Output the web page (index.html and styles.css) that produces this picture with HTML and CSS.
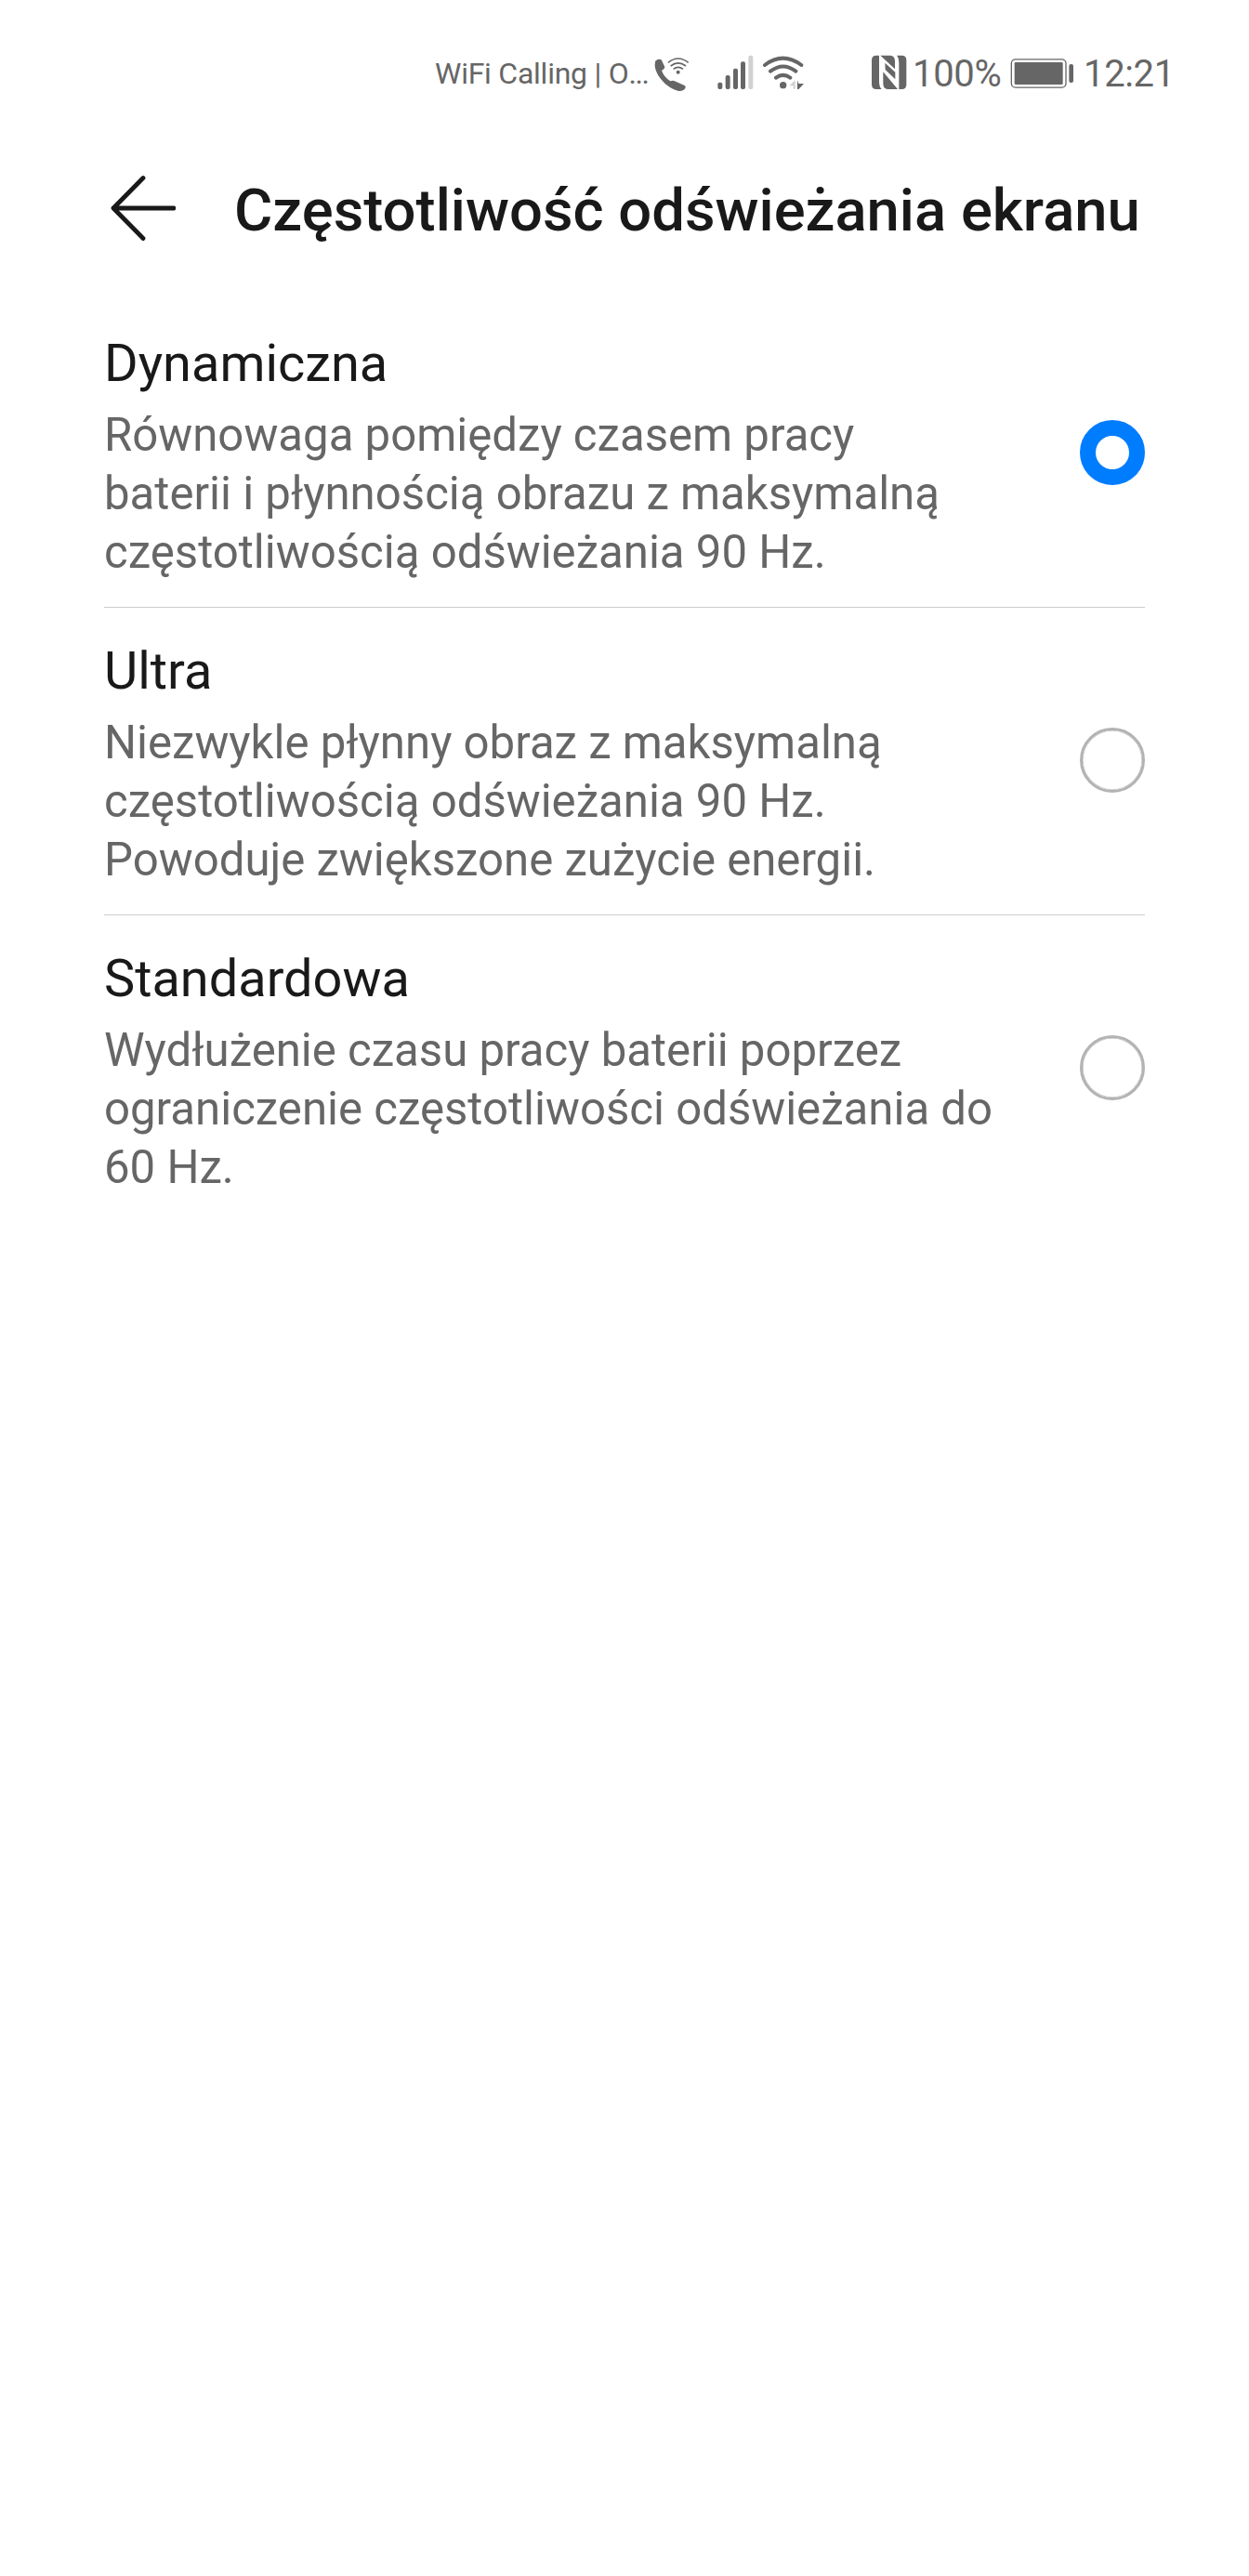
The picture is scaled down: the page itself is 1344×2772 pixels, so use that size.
FILE: index.html
```html
<!DOCTYPE html>
<html lang="pl">
<head>
<meta charset="utf-8">
<title>Częstotliwość odświeżania ekranu</title>
<link rel="stylesheet" href="styles.css">
</head>
<body>
<header class="status">
<span class="carrier">WiFi Calling | O<span class="dots">...</span></span>
<svg class="icon call" width="42" height="44" viewBox="786 48 126 132"><path d="M797 76q10-7 18-3l11 23q0 7-10 11q6 20 28 35q9-4 14 0l32 14q6 5 0 12q-7 7-18 6c-42-8-85-60-77-93q0-3 2-5z" fill="#666"/><circle cx="869" cy="113" r="6" fill="#666"/><path d="M837 82q32-26 65 0M845 93q24-19 49 0M854 103q15-12 31 0" fill="none" stroke="#666" stroke-width="5"/></svg>
<svg class="icon signal" width="42" height="44" viewBox="990 48 126 132"><g fill="#666"><rect x="997" y="146" width="15" height="22" rx="6"/><rect x="1022" y="123" width="15" height="45" rx="6"/><rect x="1047" y="101" width="15" height="67" rx="6"/><rect x="1071" y="79" width="15" height="89" rx="6"/></g><rect x="1096" y="59" width="15" height="109" rx="6" fill="#d1d1d1"/></svg>
<svg class="icon wifi" width="47" height="44" viewBox="1140 48 141 132"><path d="M1149 90q58-44 118 0M1167 110q41-31 82 0M1185 131q23-17 46 0" fill="none" stroke="#666" stroke-width="12" stroke-linecap="round"/><circle cx="1208" cy="155" r="11" fill="#666"/><path d="M1247 139v28h-6v-10h-13z" fill="#d1d1d1"/><path d="M1254 139l4 11h17l-17 18h-4z" fill="#666"/></svg>
<svg class="icon nfc" width="40" height="44" viewBox="81 48 120 132"><g fill="#666"><path d="M99 59h9v84q0 17 8 25H99q-15 0-15-15V74q0-15 15-15z"/><path d="M165 59h16q15 0 15 15v79q0 15-15 15h-9V84q0-17-7-25z"/><path d="M112 59h32q15 1 15 19v25z"/><path d="M127 83l33 30v23l-32-31z"/><path d="M121 112l47 56h-34q-13-2-13-18z"/></g></svg>
<span class="percent">100%</span>
<svg class="icon battery" width="71" height="44" viewBox="528 48 213 132"><rect x="535" y="71.500" width="176" height="91" rx="13" fill="none" stroke="#666" stroke-width="4"/><rect x="545" y="81" width="156" height="72" rx="4" fill="#666"/><rect x="721" y="87" width="14" height="60" rx="6" fill="#666"/></svg>
<span class="clock">12:21</span>
</header>
<div class="titlebar">
<svg class="back" width="72" height="72" viewBox="0 0 72 72"><path d="M37 3.500L5 36l32 32.500M5 36h65" fill="none" stroke="#191919" stroke-width="4.800" stroke-linecap="round" stroke-linejoin="round"/></svg>
<h1>Częstotliwość odświeżania ekranu</h1>
</div>
<main class="options">
<label class="option"><span class="copy"><b class="name">Dynamiczna</b><span class="desc">Równowaga pomiędzy czasem pracy<br>baterii i płynnością obrazu z maksymalną<br>częstotliwością odświeżania 90 Hz.</span></span><i class="radio on"></i></label>
<label class="option"><span class="copy"><b class="name">Ultra</b><span class="desc">Niezwykle płynny obraz z maksymalną<br>częstotliwością odświeżania 90 Hz.<br>Powoduje zwiększone zużycie energii.</span></span><i class="radio"></i></label>
<label class="option"><span class="copy"><b class="name">Standardowa</b><span class="desc">Wydłużenie czasu pracy baterii poprzez<br>ograniczenie częstotliwości odświeżania do<br>60 Hz.</span></span><i class="radio"></i></label>
</main>
</body>
</html>
```

FILE: styles.css
```css
*{box-sizing:border-box}
body{margin:0;background:#fff;font-family:Roboto,sans-serif;color:#191919;min-height:2772px}
.status{display:flex;align-items:flex-start;height:156px;padding:56px 0 0 468px;color:#666;white-space:nowrap}
.icon{flex:none}
.carrier{width:234px;margin-top:1px;font-size:32px;line-height:44px;letter-spacing:-.25px}
.dots{letter-spacing:-1.5px}
.signal{margin-left:26px}
.wifi{margin-left:8px}
.nfc{margin-left:70px}
.percent{width:104px;margin-left:5px;font-size:40px;line-height:48px;letter-spacing:-.35px}
.clock{margin-left:9px;font-size:40px;line-height:48px;letter-spacing:-.35px}
.titlebar{display:flex;align-items:center;height:136px;padding-left:117px;gap:63px}
h1{margin:0;padding-top:4px;font-size:63.35px;font-weight:500;white-space:nowrap}
.options{padding:31px 112px 0}
.option{display:flex;justify-content:space-between;align-items:flex-start;height:331px;padding-top:35px;border-bottom:1px solid #ccc}
.option:last-child{border:0}
.copy{white-space:nowrap}
.name{display:block;font-weight:400;font-size:55.9px;line-height:66px;margin-bottom:13px}
.desc{display:block;font-size:49.15px;line-height:63px;color:#666}
.radio{width:70px;height:70px;margin-top:94px;border:3px solid #b3b3b3;border-radius:50%;box-shadow:inset 0 0 0 .5px #b3b3b3}
.radio.on{border:17px solid #007dff;box-shadow:none}
```
